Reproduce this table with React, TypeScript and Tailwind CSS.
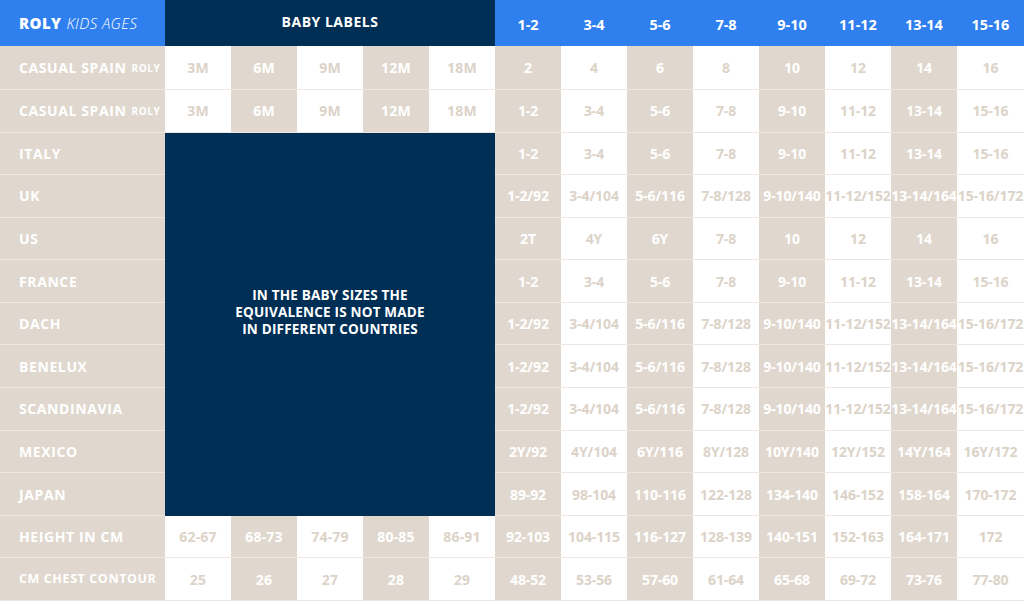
import { Fragment } from "react";

const babyRows: Record<string, string[]> = {
  casual1: ["3M", "6M", "9M", "12M", "18M"],
  casual2: ["3M", "6M", "9M", "12M", "18M"],
  height: ["62-67", "68-73", "74-79", "80-85", "86-91"],
  chest: ["25", "26", "27", "28", "29"],
};

const rows = [
  { id: "casual1", label: "CASUAL SPAIN", roly: true, kids: ["2", "4", "6", "8", "10", "12", "14", "16"] },
  { id: "casual2", label: "CASUAL SPAIN", roly: true, kids: ["1-2", "3-4", "5-6", "7-8", "9-10", "11-12", "13-14", "15-16"] },
  { id: "italy", label: "ITALY", kids: ["1-2", "3-4", "5-6", "7-8", "9-10", "11-12", "13-14", "15-16"] },
  { id: "uk", label: "UK", kids: ["1-2/92", "3-4/104", "5-6/116", "7-8/128", "9-10/140", "11-12/152", "13-14/164", "15-16/172"] },
  { id: "us", label: "US", kids: ["2T", "4Y", "6Y", "7-8", "10", "12", "14", "16"] },
  { id: "france", label: "FRANCE", kids: ["1-2", "3-4", "5-6", "7-8", "9-10", "11-12", "13-14", "15-16"] },
  { id: "dach", label: "DACH", kids: ["1-2/92", "3-4/104", "5-6/116", "7-8/128", "9-10/140", "11-12/152", "13-14/164", "15-16/172"] },
  { id: "benelux", label: "BENELUX", kids: ["1-2/92", "3-4/104", "5-6/116", "7-8/128", "9-10/140", "11-12/152", "13-14/164", "15-16/172"] },
  { id: "scandinavia", label: "SCANDINAVIA", kids: ["1-2/92", "3-4/104", "5-6/116", "7-8/128", "9-10/140", "11-12/152", "13-14/164", "15-16/172"] },
  { id: "mexico", label: "MEXICO", kids: ["2Y/92", "4Y/104", "6Y/116", "8Y/128", "10Y/140", "12Y/152", "14Y/164", "16Y/172"] },
  { id: "japan", label: "JAPAN", kids: ["89-92", "98-104", "110-116", "122-128", "134-140", "146-152", "158-164", "170-172"] },
  { id: "height", label: "HEIGHT IN CM", kids: ["92-103", "104-115", "116-127", "128-139", "140-151", "152-163", "164-171", "172"] },
  { id: "chest", label: "CM CHEST CONTOUR", small: true, kids: ["48-52", "53-56", "57-60", "61-64", "65-68", "69-72", "73-76", "77-80"] },
];

const ages = ["1-2", "3-4", "5-6", "7-8", "9-10", "11-12", "13-14", "15-16"];

const beigeCell = "bg-[#e0d8ce] text-white";
const whiteCell = "bg-white text-[#dcd3c8]";

export default function App() {
  return (
    <div
      className="w-[1024px] h-[601px] bg-white grid grid-cols-[165px_repeat(12,66px)_1fr] grid-rows-[46px_44px_repeat(12,1fr)] overflow-hidden"
      style={{ fontFamily: "'Open Sans', 'Liberation Sans', sans-serif" }}
    >
      {/* Navy note block */}
      <div className="col-start-2 col-end-7 row-start-4 row-end-13 bg-[#002f56] flex items-center justify-center pb-6">
        <p className="text-white font-bold text-[13.5px] leading-[17px] text-center tracking-[0.2px]">
          IN THE BABY SIZES THE
          <br />
          EQUIVALENCE IS NOT MADE
          <br />
          IN DIFFERENT COUNTRIES
        </p>
      </div>

      {/* Header */}
      <div className="bg-[#2f80ee] flex items-center pl-[19px] text-white text-[15px] whitespace-nowrap tracking-[0.4px]">
        <span className="font-extrabold">ROLY</span>
        <span className="italic font-light ml-[5px]">KIDS AGES</span>
      </div>
      <div className="col-span-5 bg-[#002f56] flex justify-center pt-[11px] text-white font-bold text-[14px] tracking-[0.5px]">
        BABY LABELS
      </div>
      {ages.map((a) => (
        <div key={a} className="bg-[#2f80ee] flex items-center justify-center pt-1 text-white font-bold text-[14.5px]">
          {a}
        </div>
      ))}

      {rows.map((row) => (
        <Fragment key={row.id}>
          <div className="bg-[#e0d8ce] border-b border-[#ece7e1] flex items-center pl-[19px] text-white font-bold whitespace-nowrap tracking-[0.6px]">
            <span className={row.small ? "text-[12.5px]" : "text-[14px]"}>{row.label}</span>
            {row.roly && <span className="text-[10px] ml-[5px] mt-[2px]">ROLY</span>}
          </div>
          {babyRows[row.id] &&
            babyRows[row.id].map((v, i) => (
              <div
                key={row.id + "-b" + i}
                className={`${i % 2 === 1 ? beigeCell : whiteCell} border-b border-[#ece7e1] flex items-center justify-center font-bold text-[14px] whitespace-nowrap tracking-[0.2px]`}
              >
                {v}
              </div>
            ))}
          {row.kids.map((v, i) => (
            <div
              key={row.id + "-k" + i}
              className={`${i % 2 === 0 ? beigeCell : whiteCell} border-b border-[#ece7e1] flex items-center justify-center font-bold text-[14px] whitespace-nowrap tracking-[-0.1px]`}
            >
              {v}
            </div>
          ))}
        </Fragment>
      ))}
    </div>
  );
}
